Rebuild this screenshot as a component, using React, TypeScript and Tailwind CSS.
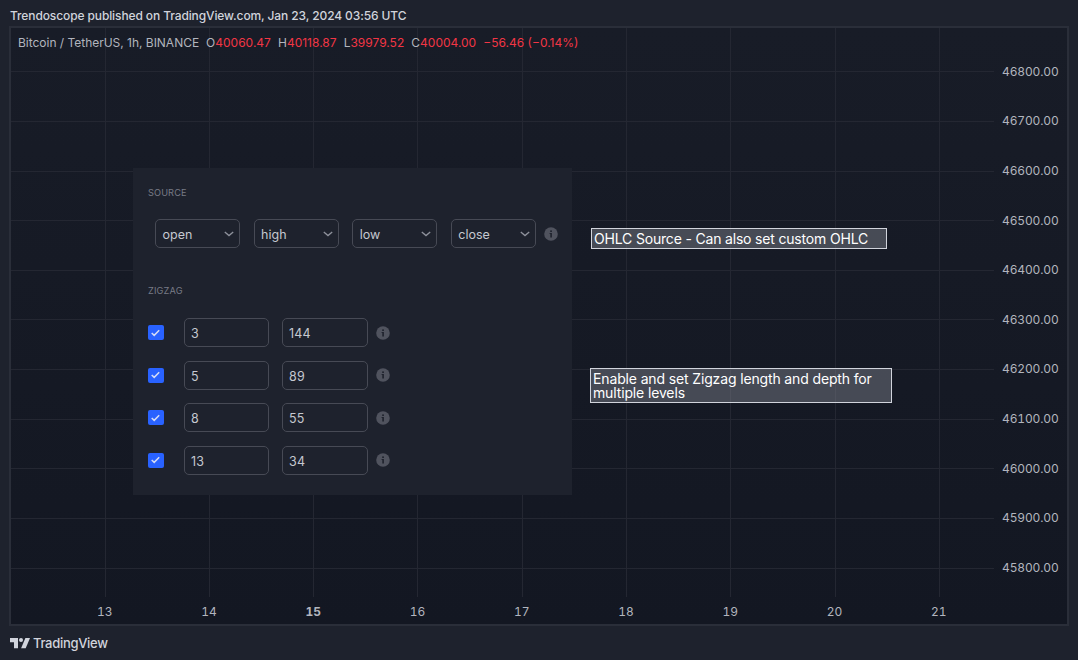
import { useState } from 'react';

const PRICES = [
  '46800.00', '46700.00', '46600.00', '46500.00', '46400.00', '46300.00',
  '46200.00', '46100.00', '46000.00', '45900.00', '45800.00',
];

const DAYS = ['13', '14', '15', '16', '17', '18', '19', '20', '21'];

// grid line positions inside the plot area
const GRID_X = [94, 198, 302, 406, 511, 615, 719, 824, 928];
const GRID_Y = [43, 93, 143, 192, 242, 291, 341, 391, 440, 490, 540];

const OHLC = [
  { key: 'O', value: '40060.47' },
  { key: 'H', value: '40118.87' },
  { key: 'L', value: '39979.52' },
  { key: 'C', value: '40004.00' },
];

const SOURCES = ['open', 'high', 'low', 'close'];

const LEVELS = [
  { length: '3', depth: '144' },
  { length: '5', depth: '89' },
  { length: '8', depth: '55' },
  { length: '13', depth: '34' },
];

function Grid() {
  return (
    <svg width="983" height="569" className="absolute left-0 top-0" shapeRendering="crispEdges">
      {GRID_X.map(x => (
        <rect key={x} x={x} y="0" width="1" height="569" fill="#242732" />
      ))}
      {GRID_Y.map(y => (
        <rect key={y} x="0" y={y} width="983" height="1" fill="#242732" />
      ))}
    </svg>
  );
}

function InfoIcon() {
  return (
    <svg width="14" height="14" viewBox="0 0 14 14" className="shrink-0">
      <circle cx="7" cy="7" r="6.8" fill="#50535e" />
      <rect x="6.2" y="3.4" width="1.7" height="1.6" fill="#1e222d" />
      <path d="M5.6 6h2.3v4.4H6.3V7.1h-.7z" fill="#1e222d" />
    </svg>
  );
}

function SourceSelect({ value }: { value: string }) {
  return (
    <button className="flex h-[29px] w-[85px] items-center justify-between rounded-[5px] border border-[#474a55] pl-[6.5px] pr-[5px] text-[12.5px] text-[#c5c8d0]">
      <span className="pt-[3px]">{value}</span>
      <svg width="10" height="6" viewBox="0 0 10 6" fill="none">
        <path d="M.8 1L5 4.6 9.2 1" stroke="#8f929c" strokeWidth="1.3" />
      </svg>
    </button>
  );
}

function Level({ length, depth }: { length: string; depth: string }) {
  const [enabled, setEnabled] = useState(true);
  const field = 'h-[29px] rounded-[5px] border border-[#474a55] bg-transparent px-[6px] pt-[2px] text-[12.5px] tracking-[0.2px] text-[#c5c8d0] outline-none';

  return (
    <div className="flex h-[29px] items-center">
      <button
        onClick={() => setEnabled(!enabled)}
        className={`mr-[20.5px] flex h-[15px] w-[15.5px] items-center justify-center rounded-[2px] ${enabled ? 'bg-[#2962ff]' : 'border border-[#474a55]'}`}
      >
        {enabled && (
          <svg width="9" height="8" viewBox="0 0 9 8" fill="none">
            <path d="M.7 4l2.5 2.4L8.2 1.3" stroke="#d5dcf5" strokeWidth="1.5" />
          </svg>
        )}
      </button>
      <input className={`${field} mr-[13px] w-[85px]`} defaultValue={length} />
      <input className={`${field} mr-[8px] w-[86px]`} defaultValue={depth} />
      <InfoIcon />
    </div>
  );
}

function SettingsPanel() {
  return (
    <div className="absolute left-[122px] top-[140px] h-[327px] w-[439px] bg-[#1e222d] pl-[15px]">
      <div className="pt-[18px] text-[9.2px] leading-[13px] tracking-[0.12px] text-[#787b86]">SOURCE</div>
      <div className="mt-[20px] flex items-center gap-[13.6px] pl-[7px]">
        {SOURCES.map(s => (
          <SourceSelect key={s} value={s} />
        ))}
        <div className="-ml-[5.2px]">
          <InfoIcon />
        </div>
      </div>
      <div className="mt-[36px] text-[9.2px] leading-[13px] tracking-[0.16px] text-[#787b86]">ZIGZAG</div>
      <div className="mt-[21px] flex flex-col gap-[13.6px]">
        {LEVELS.map(l => (
          <Level key={l.length} {...l} />
        ))}
      </div>
    </div>
  );
}

function Logo() {
  return (
    <svg width="20" height="11" viewBox="0 0 20 11" fill="#d1d4dc">
      <path d="M0 0h8v10.3H4V4.2H0z" />
      <circle cx="11" cy="2" r="2" />
      <path d="M15.4 0H20l-4.3 10.3h-4.6z" />
    </svg>
  );
}

export default function App() {
  return (
    <div className="flex h-[660px] w-[1078px] flex-col overflow-hidden bg-[#1e222d] font-['Inter',sans-serif]">
      <header className="h-[26px] pl-[10px] pt-[8px] text-[12px] font-medium leading-[16px] tracking-[-0.11px] text-[#d1d4dc]">
        Trendoscope published on TradingView.com, Jan 23, 2024 03:56 UTC
      </header>

      <main className="ml-[9px] flex h-[600px] w-[1060px] flex-col border-2 border-[#2a2e39] bg-linear-to-b from-[#181c27] to-[#131722]">
        <div className="flex h-[569px]">
          <section className="relative w-[983px]">
            <Grid />
            <div className="relative flex pl-[7px] pt-[7px] text-[12px] leading-[16px] text-[#b2b5be]">
              <span className="mr-[7px] tracking-[-0.02px]">Bitcoin / TetherUS, 1h, BINANCE</span>
              {OHLC.map(o => (
                <span key={o.key} className="mr-[7.1px]">
                  {o.key}
                  <span className="text-[#f23645]">{o.value}</span>
                </span>
              ))}
              <span className="text-[#f23645]">−56.46 (−0.14%)</span>
            </div>

            <SettingsPanel />

            <div className="absolute left-[580px] top-[200px] h-[21px] w-[296px] border border-[#d1d4dc] bg-[#787b86]/50 pl-[2px] pt-[3px] text-[14px] leading-[14px] tracking-[-0.18px] text-white">
              OHLC Source - Can also set custom OHLC
            </div>
            <div className="absolute left-[579px] top-[340px] h-[35px] w-[302px] border border-[#d1d4dc] bg-[#787b86]/50 pl-[2px] pt-[3px] text-[14px] leading-[14px] tracking-[-0.14px] text-white">
              Enable and set Zigzag length and depth for
              <br />
              multiple levels
            </div>
          </section>

          <aside className="flex flex-col pl-[8px] pt-[18.9px] text-[12px] tabular-nums tracking-[-0.14px] text-[#b2b5be]">
            {PRICES.map(p => (
              <div key={p} className="flex h-[49.62px] shrink-0 items-center">{p}</div>
            ))}
          </aside>
        </div>

        <footer className="flex pl-[41.7px] pt-[7px] text-[12px] leading-[16px] tabular-nums text-[#b2b5be]">
          {DAYS.map(d => (
            <span key={d} className={`w-[104.25px] text-center ${d === '15' ? 'font-bold' : ''}`}>{d}</span>
          ))}
        </footer>
      </main>

      <div className="flex items-center gap-[3px] pl-[10px] pt-[8px] text-[13px] font-medium leading-[18px] tracking-[-0.3px] text-[#d1d4dc]">
        <Logo />
        <span>TradingView</span>
      </div>
    </div>
  );
}
